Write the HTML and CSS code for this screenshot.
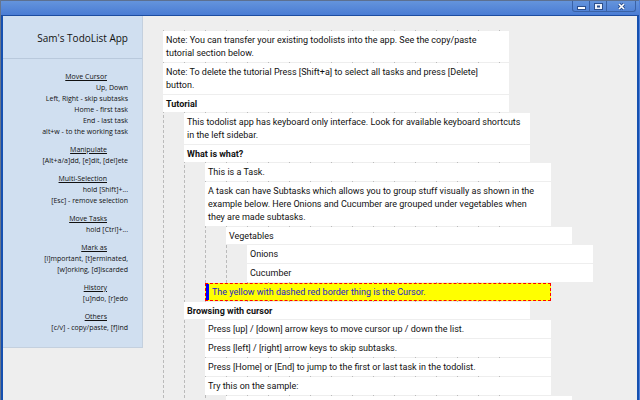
FILE: index.html
```html
<!DOCTYPE html>
<html lang="en">
<head>
    <meta charset="UTF-8">
    <meta name="viewport" content="width=device-width, initial-scale=1.0">
    <title>Sam's TodoList App</title>
    <link rel="stylesheet" href="styles.css">
</head>
<body>

    <div class="window">
        <header class="titlebar">
            <div class="controls">
                <button class="control" aria-label="Minimize">
                    <svg width="9" height="9" viewBox="0 0 9 9"><rect x="0.5" y="4.5" width="8" height="3" fill="#fff" stroke="#2c4f8c"/></svg>
                </button>
                <button class="control" aria-label="Maximize">
                    <svg width="9" height="9" viewBox="0 0 9 9"><rect x="0.5" y="1.5" width="8" height="6" fill="#eef3fb" stroke="#2c4f8c"/><rect x="3" y="3.5" width="3" height="2" fill="#2c4f8c"/></svg>
                </button>
                <button class="control close" aria-label="Close">
                    <svg width="9" height="9" viewBox="0 0 9 9"><path d="M2 2l5 5M7 2l-5 5" stroke="#2c4f8c" stroke-width="3.2"/><path d="M2 2l5 5M7 2l-5 5" stroke="#fff" stroke-width="1.6"/></svg>
                </button>
            </div>
        </header>

        <div class="content">
            <aside class="sidebar">
                <h1 class="title">Sam's TodoList App</h1>
                <div class="shortcuts">
                    <section class="group">
                        <h2 class="name">Move Cursor</h2>
                        <p>Up, Down</p>
                        <p>Left, Right - skip subtasks</p>
                        <p>Home - first task</p>
                        <p>End - last task</p>
                        <p>alt+w - to the working task</p>
                    </section>
                    <section class="group">
                        <h2 class="name">Manipulate</h2>
                        <p>[Alt+a/a]dd, [e]dit, [del]ete</p>
                    </section>
                    <section class="group">
                        <h2 class="name">Multi-Selection</h2>
                        <p>hold [Shift]+...</p>
                        <p>[Esc] - remove selection</p>
                    </section>
                    <section class="group">
                        <h2 class="name">Move Tasks</h2>
                        <p>hold [Ctrl]+...</p>
                    </section>
                    <section class="group">
                        <h2 class="name">Mark as</h2>
                        <p>[i]mportant, [t]erminated,</p>
                        <p>[w]orking, [d]iscarded</p>
                    </section>
                    <section class="group">
                        <h2 class="name">History</h2>
                        <p>[u]ndo, [r]edo</p>
                    </section>
                    <section class="group">
                        <h2 class="name">Others</h2>
                        <p>[c/v] - copy/paste, [f]ind</p>
                    </section>
                </div>
            </aside>

            <main class="board">
                <ul class="tasks root">
                    <li><p class="task">Note: You can transfer your existing todolists into the app. See the copy/paste tutorial section below.</p></li>
                    <li><p class="task">Note: To delete the tutorial Press [Shift+a] to select all tasks and press [Delete] button.</p></li>
                    <li>
                        <p class="task parent heading">Tutorial</p>
                        <ul class="tasks">
                            <li><p class="task">This todolist app has keyboard only interface. Look for available keyboard shortcuts in the left sidebar.</p></li>
                            <li>
                                <p class="task parent heading">What is what?</p>
                                <ul class="tasks">
                                    <li><p class="task">This is a Task.</p></li>
                                    <li>
                                        <p class="task">A task can have Subtasks which allows you to group stuff visually as shown in the example below. Here Onions and Cucumber are grouped under vegetables when they are made subtasks.</p>
                                        <ul class="tasks">
                                            <li>
                                                <p class="task parent">Vegetables</p>
                                                <ul class="tasks">
                                                    <li><p class="task">Onions</p></li>
                                                    <li><p class="task">Cucumber</p></li>
                                                </ul>
                                            </li>
                                        </ul>
                                    </li>
                                    <li><p class="task cursor">The yellow with dashed red border thing is the Cursor.</p></li>
                                </ul>
                            </li>
                            <li>
                                <p class="task parent heading">Browsing with cursor</p>
                                <ul class="tasks">
                                    <li><p class="task">Press [up] / [down] arrow keys to move cursor up / down the list.</p></li>
                                    <li><p class="task">Press [left] / [right] arrow keys to skip subtasks.</p></li>
                                    <li><p class="task">Press [Home] or [End] to jump to the first or last task in the todolist.</p></li>
                                    <li>
                                        <p class="task">Try this on the sample:</p>
                                        <ul class="tasks">
                                            <li><p class="task">&nbsp;</p></li>
                                        </ul>
                                    </li>
                                </ul>
                            </li>
                        </ul>
                    </li>
                </ul>
            </main>
        </div>
    </div>

</body>
</html>
```
FILE: styles.css
```css
* {
    margin: 0;
    padding: 0;
    box-sizing: border-box;
}

body {
    background-color: #eee;
    color: #111;
    font-family: Roboto, sans-serif;
    font-size: 9px;
    line-height: 13px;
}

.window {
    display: flex;
    flex-direction: column;
    height: 100vh;
    overflow: hidden;
    border-left: 1px solid #66758e;
    border-right: 1px solid #4f80d8;
}

/* title bar */
.titlebar {
    display: flex;
    justify-content: flex-end;
    flex-shrink: 0;
    height: 16px;
    padding-right: 3px;
    background: linear-gradient(#6494dc, #4a7cd4);
    border-top: 1px solid #5c7090;
    border-bottom: 1px solid #1c4ca0;
}

.controls {
    display: flex;
    height: 11px;
    border: 1px solid #3a62a6;
    border-top: none;
    border-radius: 0 0 3px 3px;
}

.control {
    display: flex;
    justify-content: center;
    align-items: center;
    width: 17px;
    border: none;
    border-right: 1px solid #3a62a6;
    background: none;
}

.close {
    width: 28px;
    border-right: none;
}

.content {
    display: flex;
    align-items: flex-start;
    flex: 1;
    min-height: 0;
    border-left: 2px solid #1550b0;
    border-right: 2px solid #1550b0;
}

/* shortcuts */
.sidebar {
    flex: 0 0 140px;
    background-color: #d0dff0;
    border-right: 1px solid #c4d0de;
    border-bottom: 1px solid #c4d0de;
    font-family: "Open Sans", sans-serif;
    text-align: right;
}

.title {
    padding: 14px 14px 12px 0;
    border-bottom: 1px solid #b9c9dc;
    font-size: 10px;
    font-weight: normal;
    line-height: 16px;
}

.shortcuts {
    display: flex;
    flex-direction: column;
    gap: 7px;
    padding: 12px 14px 14px 0;
    font-size: 7px;
    line-height: 11px;
}

.name {
    padding-right: 21px;
    font-size: 7px;
    font-weight: normal;
    text-decoration: underline;
}

/* tasks */
.board {
    flex: 1;
    padding: 14px 20px 0 20px;
}

.tasks {
    list-style: none;
    margin: 0 -21px 0 21px;
}

.root {
    max-width: 346px;
    margin: 0;
    padding-top: 1px;
    background:
        repeating-linear-gradient(to bottom, transparent 0 3px, #eee 3px 5px),
        repeating-linear-gradient(to right, #bbb 0 1px, transparent 1px 21px);
}

.task {
    margin-bottom: 1px;
    padding: 3px 6px 2px 3px;
    background-color: #fff;
}

.parent {
    padding-bottom: 1px;
}

.heading {
    font-weight: bold;
}

.cursor {
    padding: 2px 5px 1px 6px;
    border: 1px dashed #f00;
    background-color: #ff0;
    box-shadow: inset 3px 0 #00f;
    color: #22c;
}
```
